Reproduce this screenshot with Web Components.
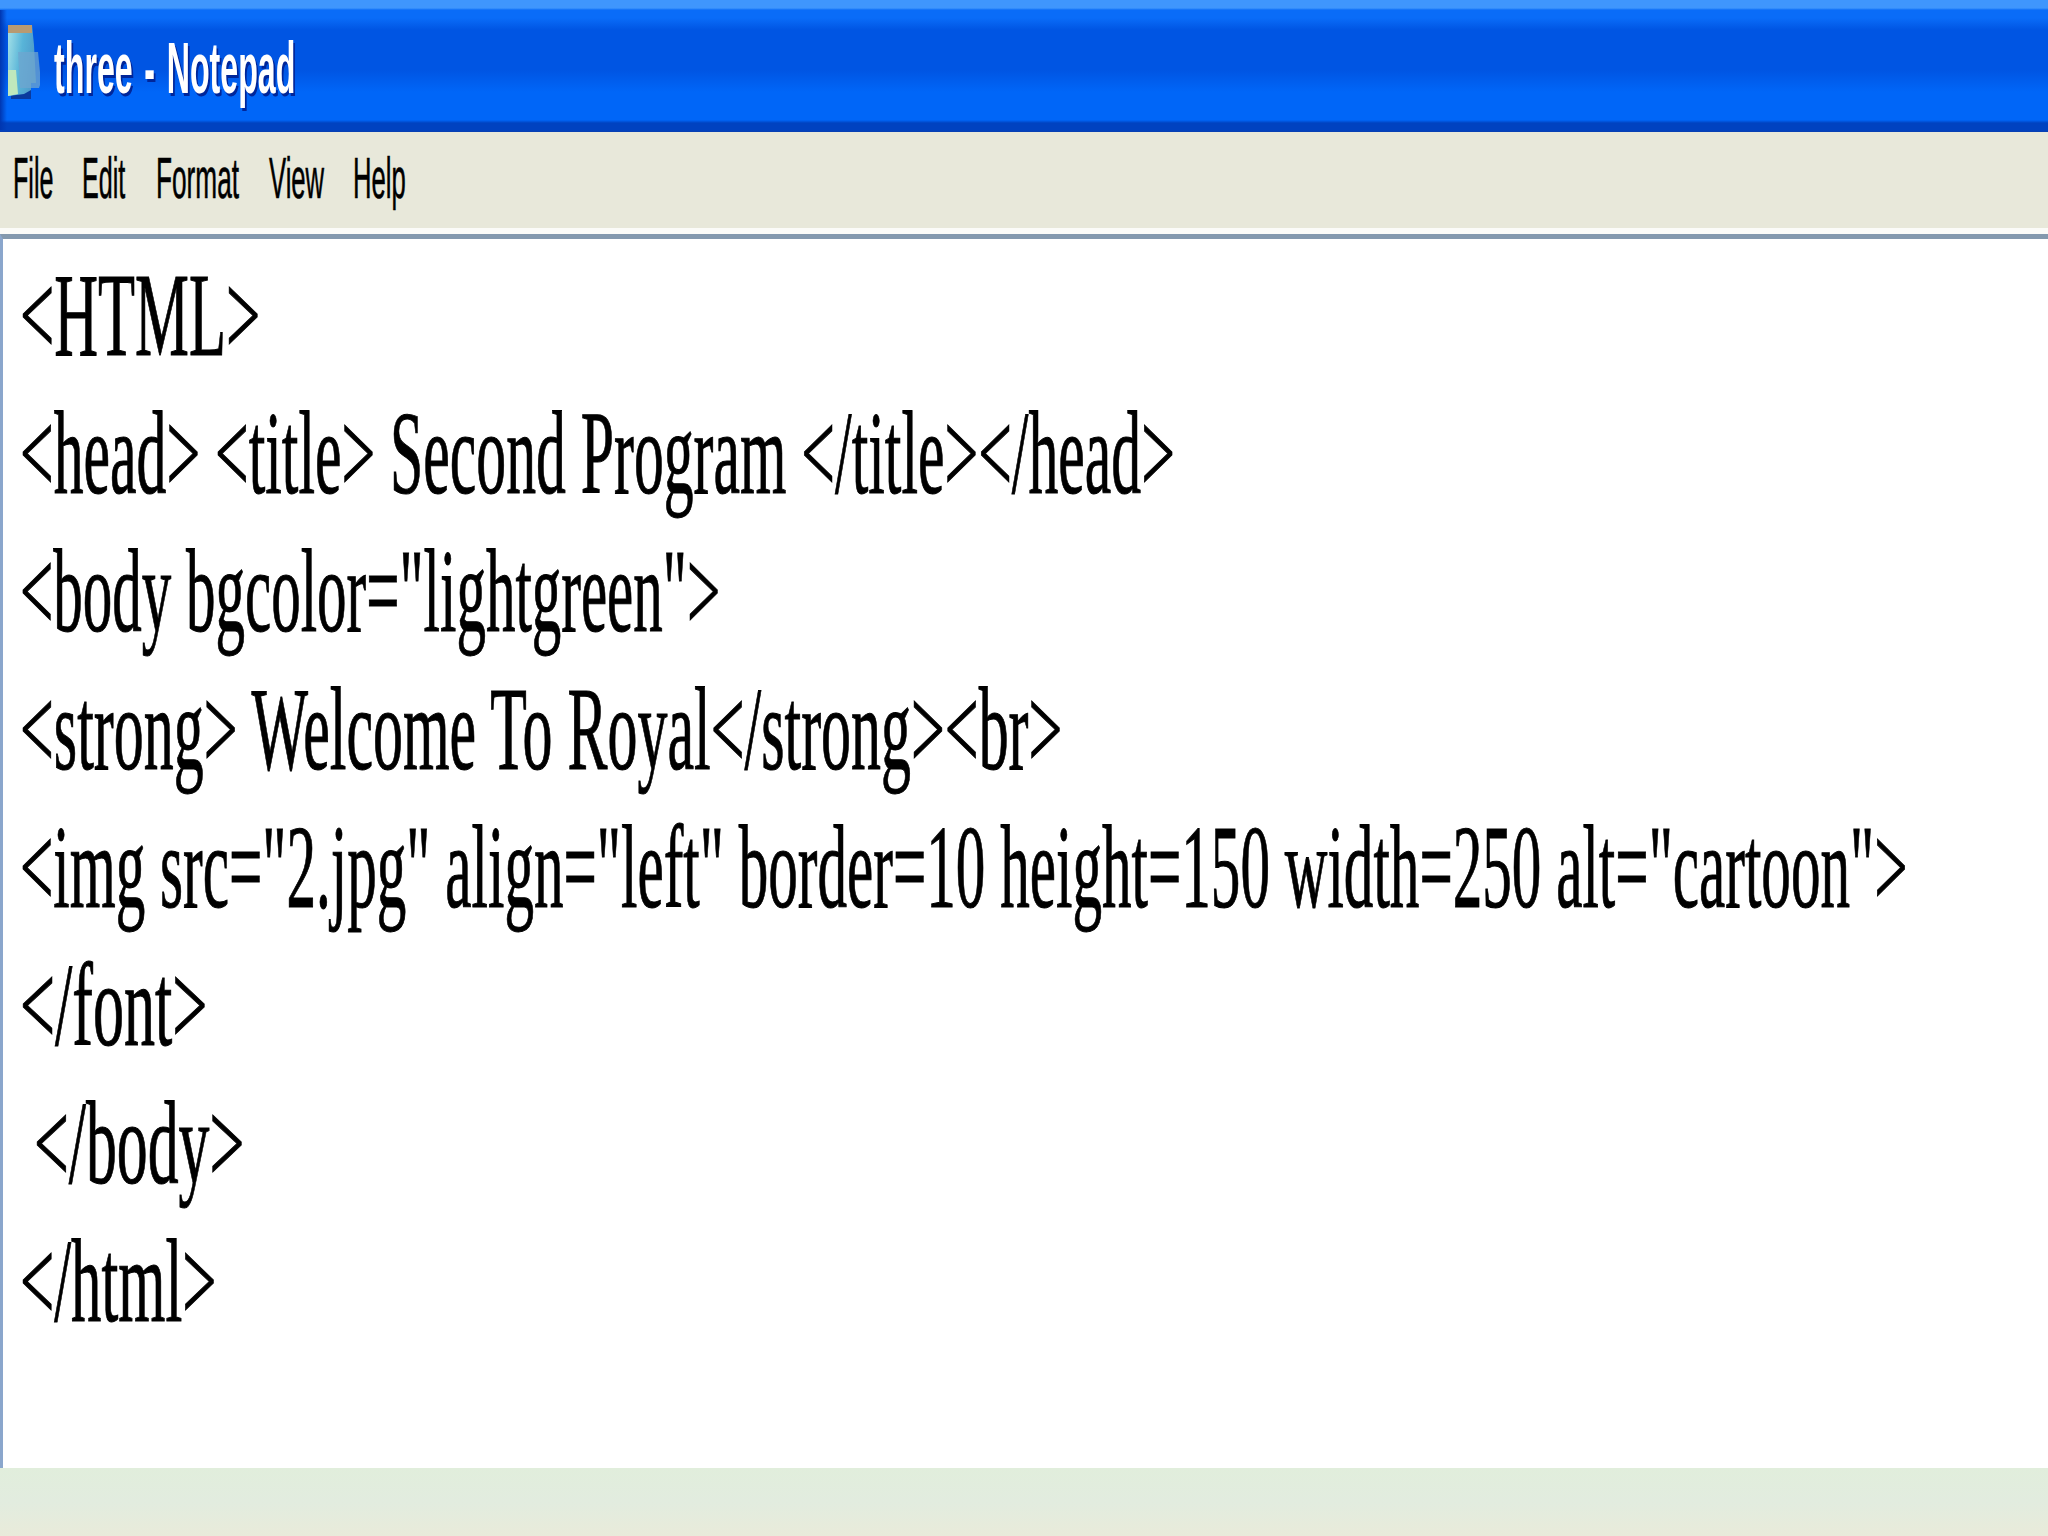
<!DOCTYPE html>
<html>
<head>
<meta charset="utf-8">
<title>three - Notepad</title>
<style>
html, body { margin: 0; height: 100%; background: #fff; }
</style>
</head>
<body>
<notepad-window>
  <title-bar slot="title">three - Notepad</title-bar>
  <menu-bar slot="menu">
    <menu-item w="69" sx="0.44">File</menu-item>
    <menu-item w="74" sx="0.44">Edit</menu-item>
    <menu-item w="113" sx="0.46">Format</menu-item>
    <menu-item w="84" sx="0.45">View</menu-item>
    <menu-item w="50" sx="0.45">Help</menu-item>
  </menu-bar>
  <editor-pane slot="editor">
    <code-line sx="0.514">&lt;HTML&gt;</code-line>
    <code-line sx="0.506">&lt;head&gt; &lt;title&gt; Second Program &lt;/title&gt;&lt;/head&gt;</code-line>
    <code-line sx="0.5">&lt;body bgcolor="lightgreen"&gt;</code-line>
    <code-line sx="0.508">&lt;strong&gt; Welcome To Royal&lt;/strong&gt;&lt;br&gt;</code-line>
    <code-line sx="0.501">&lt;img src="2.jpg" align="left" border=10 height=150 width=250 alt="cartoon"&gt;</code-line>
    <code-line sx="0.526">&lt;/font&gt;</code-line>
    <code-line sx="0.523" indent>&lt;/body&gt;</code-line>
    <code-line sx="0.514">&lt;/html&gt;</code-line>
  </editor-pane>
</notepad-window>
<script>
class NotepadWindow extends HTMLElement {
  constructor() {
    super();
    this.attachShadow({ mode: 'open' }).innerHTML = `
      <style>
        :host { display: flex; flex-direction: column; width: 2048px; height: 1536px; overflow: hidden; }
        .foot { flex: 1; background: linear-gradient(#e1eedc, #e2ecdf 50%, #e9ebda); }
      </style>
      <slot name="title"></slot>
      <slot name="menu"></slot>
      <slot name="editor"></slot>
      <div class="foot"></div>`;
  }
}

class TitleBar extends HTMLElement {
  constructor() {
    super();
    this.attachShadow({ mode: 'open' }).innerHTML = `
      <style>
        :host {
          display: flex; align-items: flex-start; height: 132px; box-sizing: border-box; padding-left: 8px; overflow: hidden;
          background:
            linear-gradient(90deg, #0036b0 0, rgba(0,54,176,0) 7px) 0 10px / 100% 120px no-repeat,
            linear-gradient(#3f96fd 0, #3f96fd 8px, #0a6cf8 10px, #0a6cf8 18px, #0055e3 30px, #0055e3 70px, #0066f8 92px, #0066f8 120px, #0042c0 123px, #0042c0 130px, #0a3fb0 132px);
          color: #fff;
          font: bold 72px "Liberation Sans", sans-serif;
        }
        svg { width: 32px; height: 76px; margin-top: 24px; flex: none; }
        .wrap { margin-left: 14px; margin-top: 27px; height: 83px; line-height: 83px; white-space: pre; }
        .txt { display: inline-block; word-spacing: 6px; transform: scaleX(0.447); transform-origin: left center; text-shadow: 4px 3px 0 #00269a; }
      </style>
      <svg viewBox="0 0 32 76" aria-hidden="true">
        <defs>
          <linearGradient id="pad" x1="0" y1="0" x2="1" y2="0.3">
            <stop offset="0" stop-color="#a6e2e8"/>
            <stop offset="0.55" stop-color="#58b4d8"/>
            <stop offset="1" stop-color="#4f9ccb"/>
          </linearGradient>
        </defs>
        <path d="M3 66h20v9H3z" fill="#0a3a9e"/>
        <path d="M0 1h24l2 20 2 38h-5v7l-7 4-16 2z" fill="url(#pad)"/>
        <path d="M0 1h24v8H0z" fill="#b89a72"/>
        <path d="M0 46l8 0 2 24-10 2z" fill="#bfe8bc"/>
        <path d="M10 28h20l3 30-2 6H12z" fill="#6fa6cf" opacity=".75"/>
      </svg>
      <div class="wrap"><span class="txt"><slot></slot></span></div>`;
  }
}

class MenuBar extends HTMLElement {
  constructor() {
    super();
    this.attachShadow({ mode: 'open' }).innerHTML = `
      <style>
        :host { display: flex; height: 102px; box-sizing: border-box; padding: 4px 0 0 13px; background: #e8e8da; border-bottom: 6px solid #fbfbf8; }
      </style>
      <slot></slot>`;
  }
}

class MenuItem extends HTMLElement {
  constructor() {
    super();
    this.attachShadow({ mode: 'open' }).innerHTML = `
      <style>
        :host { display: block; flex: none; color: #000; font: 57px/84px "Liberation Sans", sans-serif; }
        span { display: inline-block; white-space: pre; transform-origin: left center; -webkit-text-stroke: 0.6px #000; }
      </style>
      <span><slot></slot></span>`;
  }
  connectedCallback() {
    this.style.width = this.getAttribute('w') + 'px';
    this.shadowRoot.querySelector('span').style.transform = 'scaleX(' + this.getAttribute('sx') + ')';
  }
}

class EditorPane extends HTMLElement {
  constructor() {
    super();
    this.attachShadow({ mode: 'open' }).innerHTML = `
      <style>
        :host { display: block; height: 1234px; box-sizing: border-box; padding: 8px 0 0 17px; background: #fff; border-top: 5px solid #8499ae; border-left: 3px solid #8aa6cc; overflow: hidden; }
      </style>
      <slot></slot>`;
  }
}

class CodeLine extends HTMLElement {
  constructor() {
    super();
    this.attachShadow({ mode: 'open' }).innerHTML = `
      <style>
        :host { display: block; height: 138px; color: #000; font: 118px/138px "Liberation Serif", serif; }
        :host([indent]) { padding-left: 14px; }
        span { display: inline-block; white-space: pre; transform-origin: left center; -webkit-text-stroke: 1px #000; }
      </style>
      <span><slot></slot></span>`;
  }
  connectedCallback() {
    this.shadowRoot.querySelector('span').style.transform = 'scaleX(' + this.getAttribute('sx') + ')';
  }
}

customElements.define('notepad-window', NotepadWindow);
customElements.define('title-bar', TitleBar);
customElements.define('menu-bar', MenuBar);
customElements.define('menu-item', MenuItem);
customElements.define('editor-pane', EditorPane);
customElements.define('code-line', CodeLine);
</script>
</body>
</html>
